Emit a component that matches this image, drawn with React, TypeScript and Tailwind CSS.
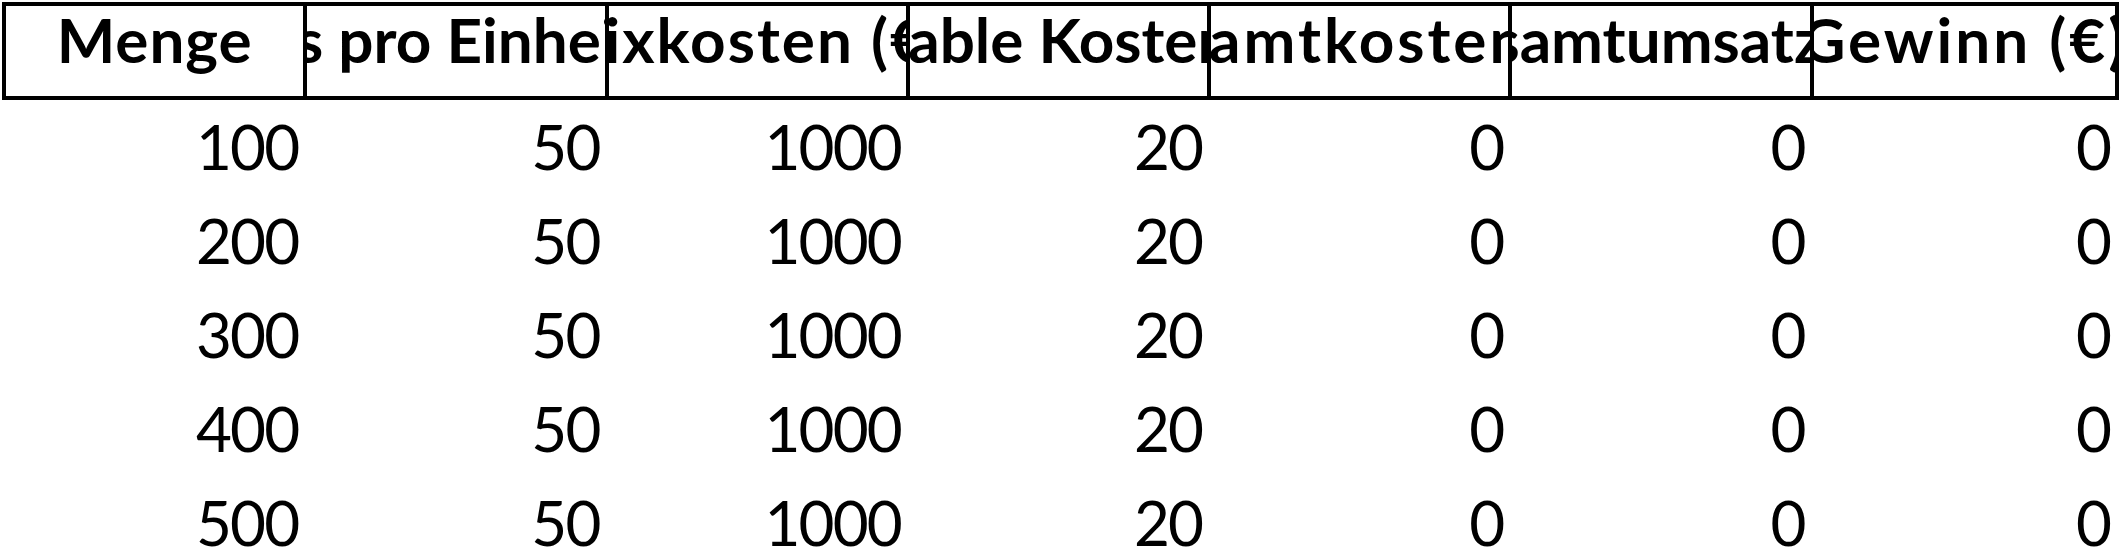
// header labels with per-column tracking to mimic the spreadsheet font widths
const headers = [
  { label: 'Menge', tracking: 'tracking-[1px]' },
  { label: 'Preis pro Einheit (€)', tracking: 'tracking-[0px]' },
  { label: 'Fixkosten (€)', tracking: 'tracking-[2px]' },
  { label: 'Variable Kosten (€)', tracking: 'tracking-[0px]' },
  { label: 'Gesamtkosten (€)', tracking: 'tracking-[3px]' },
  { label: 'Gesamtumsatz (€)', tracking: 'tracking-[0px]' },
  { label: 'Gewinn (€)', tracking: 'tracking-[3px]' },
];

const rows = [100, 200, 300, 400, 500].map((menge) => [menge, 50, 1000, 20, 0, 0, 0]);

export default function App() {
  return (
    <div className="min-h-screen bg-white pl-[2px] pt-[2px] text-black" style={{ fontFamily: 'Lato, "Noto Sans", sans-serif' }}>
      <div className="w-[2117px]">
        {/* Header */}
        <div className="grid grid-cols-7 border-4 border-black">
          {headers.map((h, i) => (
            <div
              key={h.label}
              className={`flex h-[90px] justify-center overflow-hidden whitespace-nowrap pt-[2px] text-[62px] font-bold leading-none ${h.tracking} ${i < headers.length - 1 ? 'border-r-4 border-black' : ''}`}
            >
              <span>{h.label}</span>
            </div>
          ))}
        </div>

        {/* Data rows */}
        {rows.map((r, ri) => (
          <div key={ri} className="grid grid-cols-7 border-x-4 border-transparent">
            {r.map((v, ci) => (
              <div
                key={ci}
                className={`h-[94px] pt-[15px] pr-[5px] text-right text-[62px] leading-none tracking-[-0.03em] ${ci < r.length - 1 ? 'border-r-4 border-transparent' : ''}`}
              >
                {v}
              </div>
            ))}
          </div>
        ))}
      </div>
    </div>
  );
}
